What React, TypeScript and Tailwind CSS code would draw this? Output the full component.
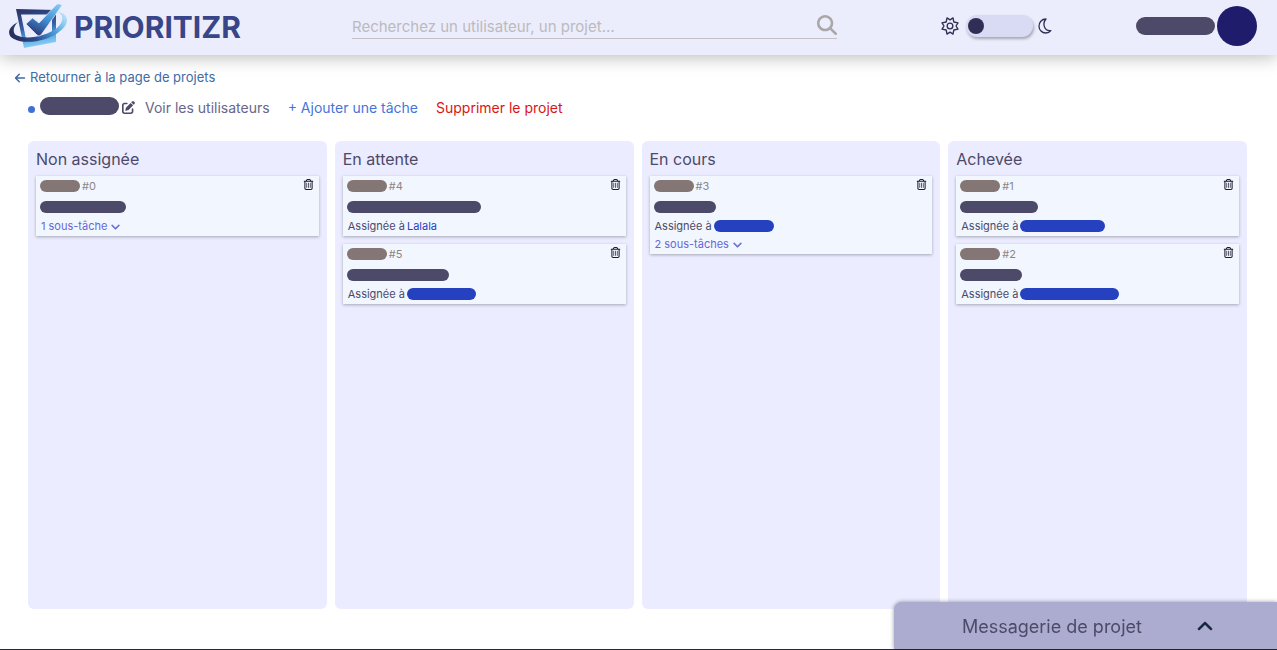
import {
  FaArrowLeft,
  FaChevronDown,
  FaChevronUp,
  FaMagnifyingGlass,
  FaPenToSquare,
  FaRegTrashCan,
} from "react-icons/fa6";

type Task = {
  id: number;
  title: string;
  assignee?: string;
  assigneeName?: string;
  subtasks?: string;
};

type Column = { name: string; tasks: Task[] };

const columns: Column[] = [
  {
    name: "Non assignée",
    tasks: [{ id: 0, title: "w-[86px]", subtasks: "1 sous-tâche" }],
  },
  {
    name: "En attente",
    tasks: [
      { id: 4, title: "w-[134px]", assigneeName: "Lalala" },
      { id: 5, title: "w-[102px]", assignee: "w-[69px]" },
    ],
  },
  {
    name: "En cours",
    tasks: [
      { id: 3, title: "w-[62px]", assignee: "w-[60px]", subtasks: "2 sous-tâches" },
    ],
  },
  {
    name: "Achevée",
    tasks: [
      { id: 1, title: "w-[78px]", assignee: "w-[85px]" },
      { id: 2, title: "w-[62px]", assignee: "w-[99px]" },
    ],
  },
];

function LogoMark() {
  return (
    <svg viewBox="0 0 62 48" className="mb-1 h-12 w-[62px] shrink-0" aria-hidden="true">
      <defs>
        <linearGradient id="frame" x1="0.2" y1="0" x2="0.4" y2="1">
          <stop offset="0" stopColor="#2b3568" />
          <stop offset="0.5" stopColor="#3560a6" />
          <stop offset="0.8" stopColor="#5fb0e4" />
          <stop offset="1" stopColor="#8fd2f5" />
        </linearGradient>
        <linearGradient id="orbit" x1="0" y1="0.6" x2="1" y2="0.2">
          <stop offset="0" stopColor="#27305f" />
          <stop offset="0.3" stopColor="#2f4c92" />
          <stop offset="0.65" stopColor="#4a9bdc" />
          <stop offset="1" stopColor="#b4e3fa" />
        </linearGradient>
        <linearGradient id="check" x1="0.9" y1="0" x2="0.35" y2="1">
          <stop offset="0" stopColor="#7fcdf5" />
          <stop offset="0.55" stopColor="#3f8bd0" />
          <stop offset="1" stopColor="#2b3a78" />
        </linearGradient>
      </defs>
      <path
        fill="url(#frame)"
        fillRule="evenodd"
        d="M8 7L48 8L48 40L16 46ZM13 12.500L18 37L44 34L44 12.500Z"
      />
      <path
        fill="url(#orbit)"
        d="M10 20C0 25 -2 33 6 37C17 43 40 39 51 30C62 22 62 12 50 10C56 13 56 20 49 26C39 34 19 38 9 33.500C4 31 5 25 10 20Z"
      />
      <path
        fill="url(#check)"
        stroke="#ecedfc"
        strokeWidth="0.7"
        d="M18 22L24.500 16L31 21L49 2Q52 1 54 3.500L33 33Q31 35 29 33Z"
      />
    </svg>
  );
}

function SunIcon() {
  return (
    <svg
      viewBox="0 0 24 24"
      className="size-5"
      fill="none"
      stroke="#302e54"
      strokeWidth="1.6"
      strokeLinejoin="round"
      aria-hidden="true"
    >
      <path d="M12 4.600L15.600 2.200L16.600 7.200L21.600 8.300L19.200 12L21.600 15.700L16.600 16.800L15.600 21.800L12 19.400L8.400 21.800L7.400 16.800L2.400 15.700L4.800 12L2.400 8.300L7.400 7.200L8.400 2.200Z" />
      <circle cx="12" cy="12" r="3.4" />
    </svg>
  );
}

function MoonIcon() {
  return (
    <svg
      viewBox="0 0 16 18"
      className="h-[18px] w-4"
      fill="none"
      stroke="#302e54"
      strokeWidth="1.3"
      strokeLinejoin="round"
      aria-hidden="true"
    >
      <path d="M9 2C4.500 2 2 5.500 2 9.200C2 13 5 16 8.700 16C11 16 12.700 15.200 13.800 13.600C7.600 14.500 4.800 7 9 2Z" />
    </svg>
  );
}

function TaskCard({ task }: { task: Task }) {
  return (
    <li className="bg-[#f2f7ff] pb-px text-[11px] text-[#4c4a68] shadow-[0_1px_3px_rgba(0,0,0,0.3)]">
      <div className="flex h-5 items-center gap-0.5 pr-[5px] pl-1">
        <span className="h-3 w-10 rounded-full bg-[#837674]" />
        <span className="text-[#8b8685]">#{task.id}</span>
        <button
          type="button"
          aria-label={`Supprimer la tâche ${task.id}`}
          className="ml-auto pb-1 text-[#1d1b30]"
        >
          <FaRegTrashCan className="size-[11px]" />
        </button>
      </div>
      <div className="flex h-[21px] items-center pl-1">
        <span className={`h-3 rounded-full bg-[#4c4a68] ${task.title}`} />
      </div>
      {(task.assignee || task.assigneeName) && (
        <div className="flex h-[18px] items-center gap-0.5 pl-[5px]">
          <span>Assignée à</span>
          {task.assigneeName && (
            <a href="#profil" className="text-[#2541bf]">
              {task.assigneeName}
            </a>
          )}
          {task.assignee && (
            <span className={`h-3 rounded-full bg-[#2541bf] ${task.assignee}`} />
          )}
        </div>
      )}
      {task.subtasks && (
        <button
          type="button"
          className="flex h-[18px] items-center gap-1 pl-[5px] text-[#6567d6]"
        >
          {task.subtasks}
          <FaChevronDown className="size-[9px] stroke-current stroke-[30]" />
        </button>
      )}
    </li>
  );
}

export default function App() {
  return (
    <div className="flex min-h-screen flex-col border-b border-[#2b2b35] bg-white font-['Inter',sans-serif] text-[#4c4a68]">
      <header className="flex h-[55px] items-center bg-[#ecedfc] shadow-[0_2px_18px_rgba(0,0,0,0.28)]">
        <a href="#accueil" className="flex w-[352px] shrink-0 items-center gap-1 pl-2">
          <LogoMark />
          <span className="text-[30px] font-bold text-[#384689]">PRIORITIZR</span>
        </a>
        <form className="flex h-[22px] w-[38%] items-center border-b border-[#c3c0cc]">
          <input
            type="search"
            aria-label="Recherche"
            placeholder="Recherchez un utilisateur, un projet…"
            className="min-w-0 flex-1 bg-transparent text-[15px] outline-none placeholder:text-[#bbbabd]"
          />
          <button type="submit" aria-label="Rechercher" className="pb-1 text-[#a9a7a9]">
            <FaMagnifyingGlass className="size-5" />
          </button>
        </form>
        <div className="mb-1 ml-auto flex items-center">
          <SunIcon />
          <label className="mr-1 ml-1.5 flex h-[22px] w-[67px] cursor-pointer items-center rounded-full bg-[#d9dbf5] px-0.5 shadow-[1px_2px_3px_rgba(0,0,0,0.3)]">
            <input type="checkbox" aria-label="Mode sombre" className="peer sr-only" />
            <span className="size-4 rounded-full bg-[#302e54] peer-checked:ml-auto" />
          </label>
          <MoonIcon />
        </div>
        <a
          href="#profil"
          aria-label="Profil"
          className="mb-1 ml-[83px] flex items-center gap-0.5 pr-5"
        >
          <span className="h-[18px] w-[79px] rounded-full bg-[#4c4a68]" />
          <span className="size-10 rounded-full bg-[#1f1d6b]" />
        </a>
      </header>

      <main className="flex flex-1 flex-col pb-10">
        <a
          href="#projets"
          className="mt-[13px] flex h-5 items-center gap-1 self-start pl-3.5 text-[13px] text-[#406ba5]"
        >
          <FaArrowLeft className="size-3" />
          Retourner à la page de projets
        </a>
        <div className="mt-[7px] flex h-6 items-center pl-7 text-[14px]">
          <span className="mt-1 size-[7px] rounded-full bg-[#426fd4]" />
          <span className="mb-0.5 ml-[5px] h-[18px] w-[79px] rounded-full bg-[#4c4a68]" />
          <button type="button" aria-label="Modifier le projet" className="ml-[3px]">
            <FaPenToSquare className="size-[13px]" />
          </button>
          <button type="button" className="ml-2.5 text-[#68668a]">
            Voir les utilisateurs
          </button>
          <button type="button" className="ml-[18px] text-[#4575db]">
            + Ajouter une tâche
          </button>
          <button type="button" className="ml-[18px] text-[#dc1414]">
            Supprimer le projet
          </button>
        </div>

        <div className="mt-[22px] grid flex-1 grid-cols-4 gap-2 pr-[30px] pl-7">
          {columns.map((column) => (
            <section key={column.name} className="rounded-md bg-[#ebecff] px-2 pt-1.5">
              <h2 className="mb-[5px] h-6 text-[16px] leading-6">{column.name}</h2>
              <ul className="flex flex-col gap-2">
                {column.tasks.map((task) => (
                  <TaskCard key={task.id} task={task} />
                ))}
              </ul>
            </section>
          ))}
        </div>
      </main>

      <button
        type="button"
        className="fixed right-0 bottom-px flex h-[47px] w-[30%] items-center rounded-tl-lg bg-[#acabd0] pt-0.5 pr-16 pl-[68px] text-[18px] shadow-[0_0_4px_rgba(0,0,0,0.4)]"
      >
        Messagerie de projet
        <FaChevronUp className="ml-auto size-4 stroke-current stroke-[20] text-[#10243c]" />
      </button>
    </div>
  );
}
